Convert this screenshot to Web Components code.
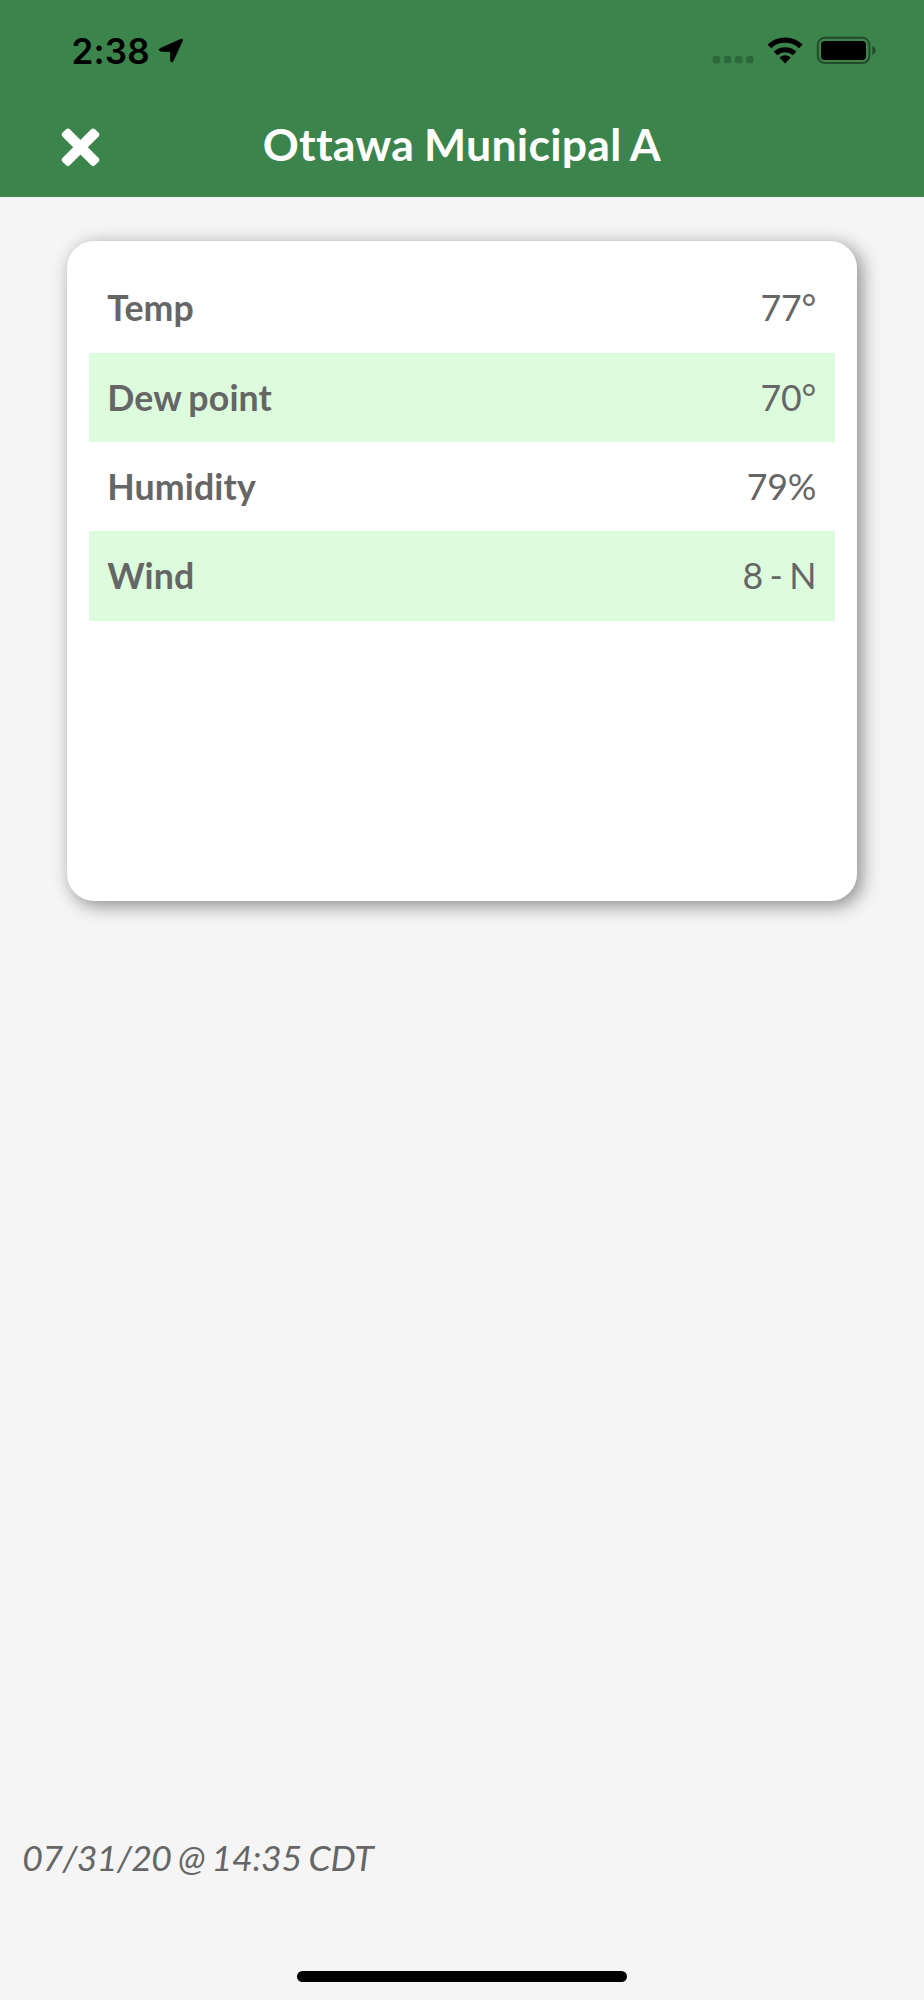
<!DOCTYPE html>
<html lang="en">
<head>
<meta charset="utf-8">
<title>Ottawa Municipal A</title>
<style>
html,body{margin:0;height:100%}
body{font-family:Lato,"Liberation Sans",sans-serif;font-variant-ligatures:none;color:#666;background:#f5f5f5}
</style>
</head>
<body>
<weather-app></weather-app>
<script>
function define(name, html) {
  const t = document.createElement('template');
  t.innerHTML = html;
  customElements.define(name, class extends HTMLElement {
    constructor() {
      super();
      this.attachShadow({mode: 'open'}).appendChild(t.content.cloneNode(true));
    }
  });
}
define('status-bar', `
<style>
:host{display:flex;box-sizing:border-box;height:100px;justify-content:space-between;align-items:flex-start;padding:29px 48px 0 71.5px;color:#000}
.time{font:600 35px/44px Inter,sans-serif;letter-spacing:.2px;white-space:nowrap}
.left,.right{display:flex}
.left svg{margin:9px 0 0 8.2px}
svg{display:block}
</style>
<div class="left"><span class="time">2:38</span>
<svg width="26" height="26" viewBox="0 0 26 26"><path d="M23.8 1.2Q24.9 1 24.5 2.4L15 23.2Q14.2 24.5 13.1 23.7Q12.7 23.3 12.6 22.3L12.4 13.5L3 13.2Q1.2 12.9 1.2 11.7Q1.2 10.9 2.3 10.4L22.4 1.5Z" fill="#000" stroke="#000" stroke-width=".8"/></svg></div>
<div class="right">
<svg width="166" height="36" viewBox="710 29 166 36">
<g fill="#000" fill-opacity=".22"><rect x="712.7" y="56" width="7.4" height="7.2" rx="2"/><rect x="723.9" y="56" width="7.4" height="7.2" rx="2"/><rect x="735" y="56" width="7.4" height="7.2" rx="2"/><rect x="746.1" y="56" width="7.4" height="7.2" rx="2"/></g>
<path d="M785.1 63.5L779.9 58.1Q779.5 57.6 780.1 57.1Q785.1 53.4 790.1 57.1Q790.7 57.6 790.3 58.1Z"/>
<path d="M773.7 51.6A16.8 16.8 0 0 1 796.5 51.6L792.9 55.2A11.7 11.7 0 0 0 777.3 55.2Z"/>
<path d="M767.5 44.6A25.3 25.3 0 0 1 802.7 44.6L799 48.2A20.3 20.3 0 0 0 771.2 48.2Z"/>
<rect x="817.8" y="37.8" width="51.6" height="25.2" rx="7" fill="none" stroke="#000" stroke-opacity=".42" stroke-width="2"/>
<rect x="821" y="41" width="45" height="19" rx="4"/>
<path d="M872.3 46V55Q875.6 53.7 875.6 50.5T872.3 46Z" fill-opacity=".42"/>
</svg></div>`);
define('nav-bar', `
<style>
:host{display:grid;grid-template-columns:160px 1fr 160px;height:96.8px}
svg{display:block;margin:28px 0 0 61px}
h1{margin:15.5px 0 0;font-weight:700;font-size:44.64px;line-height:56px;text-align:center;color:#fff;white-space:nowrap;word-spacing:-1.3px;letter-spacing:.25px}
</style>
<svg width="39" height="39" viewBox="-19.5 -19.3 39 39"><g fill="#fff"><rect x="-23" y="-5.2" width="46" height="10.4" rx="3" transform="rotate(45)"/><rect x="-23" y="-5.2" width="46" height="10.4" rx="3" transform="rotate(-45)"/></g></svg>
<h1><slot></slot></h1>`);
define('weather-row', `
<style>
:host{display:flex;justify-content:space-between;box-sizing:border-box;height:89.28px;padding:1px 18.5px 0 17.86px;font-size:35.71px;line-height:88.28px;white-space:nowrap;word-spacing:-2.4px}
:host([shaded]){background:#ddfcdd}
b{font-weight:700;letter-spacing:.12px;word-spacing:-1.6px}
.value{letter-spacing:-.2px}
</style>
<b><slot name="label"></slot></b><span class="value"><slot></slot></span>`);
define('weather-card', `
<style>
:host{display:block;box-sizing:border-box;height:660px;margin:44.2px 67px 0;padding:22.5px 22.3px;border-radius:27px;background:#fff;box-shadow:4.46px 4.46px 17.86px rgba(0,0,0,.42)}
</style><slot></slot>`);
define('home-indicator', `
<style>:host{display:block;width:330px;height:11.2px;border-radius:6px;background:#000;margin:0 auto 18px}</style>`);
define('weather-app', `
<style>
:host{display:flex;flex-direction:column;height:2000px;background:#f5f5f5}
header{background:#3b844b;height:196.8px;flex:none}
footer{margin-top:auto}
p{margin:0 0 91px;padding-left:22.3px;font-size:35.71px;line-height:44px;font-style:italic;word-spacing:-1.6px;letter-spacing:-.27px}
.date{letter-spacing:-.62px}
</style>
<header><status-bar></status-bar><nav-bar>Ottawa Municipal A</nav-bar></header>
<weather-card>
<weather-row><span slot="label">Temp</span>77°</weather-row>
<weather-row shaded><span slot="label">Dew point</span>70°</weather-row>
<weather-row><span slot="label">Humidity</span>79%</weather-row>
<weather-row shaded><span slot="label">Wind</span>8 - N</weather-row>
</weather-card>
<footer><p><span class="date">07/31/20</span> @ 14:35 CDT</p><home-indicator></home-indicator></footer>`);
</script>
</body>
</html>
